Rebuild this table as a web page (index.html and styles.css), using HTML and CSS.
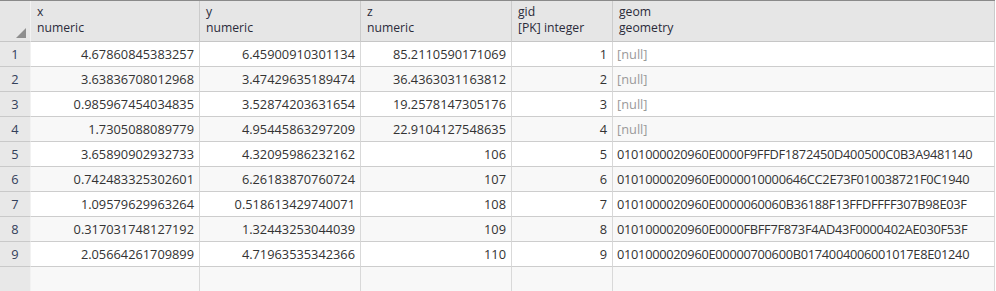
FILE: index.html
```html
<!DOCTYPE html>
<html>
<head>
<meta charset="utf-8">
<link rel="stylesheet" href="styles.css">
</head>
<body>
<div class="grid">
  <div class="hcell corner"><span class="sort"></span></div>
  <div class="hcell"><div>x</div><div>numeric</div></div>
  <div class="hcell"><div>y</div><div>numeric</div></div>
  <div class="hcell"><div>z</div><div>numeric</div></div>
  <div class="hcell"><div>gid</div><div>[PK] integer</div></div>
  <div class="hcell"><div>geom</div><div>geometry</div></div>

  <div class="rh">1</div><div class="c num">4.67860845383257</div><div class="c num">6.45900910301134</div><div class="c num">85.2110590171069</div><div class="c num">1</div><div class="c txt null">[null]</div>
  <div class="rh">2</div><div class="c num alt">3.63836708012968</div><div class="c num alt">3.47429635189474</div><div class="c num alt">36.4363031163812</div><div class="c num alt">2</div><div class="c txt null alt">[null]</div>
  <div class="rh">3</div><div class="c num">0.985967454034835</div><div class="c num">3.52874203631654</div><div class="c num">19.2578147305176</div><div class="c num">3</div><div class="c txt null">[null]</div>
  <div class="rh">4</div><div class="c num alt">1.7305088089779</div><div class="c num alt">4.95445863297209</div><div class="c num alt">22.9104127548635</div><div class="c num alt">4</div><div class="c txt null alt">[null]</div>
  <div class="rh">5</div><div class="c num">3.65890902932733</div><div class="c num">4.32095986232162</div><div class="c num">106</div><div class="c num">5</div><div class="c txt hex">0101000020960E0000F9FFDF1872450D400500C0B3A9481140</div>
  <div class="rh">6</div><div class="c num alt">0.742483325302601</div><div class="c num alt">6.26183870760724</div><div class="c num alt">107</div><div class="c num alt">6</div><div class="c txt hex alt">0101000020960E0000010000646CC2E73F010038721F0C1940</div>
  <div class="rh">7</div><div class="c num">1.09579629963264</div><div class="c num">0.518613429740071</div><div class="c num">108</div><div class="c num">7</div><div class="c txt hex">0101000020960E0000060060B36188F13FFDFFFF307B98E03F</div>
  <div class="rh">8</div><div class="c num alt">0.317031748127192</div><div class="c num alt">1.32443253044039</div><div class="c num alt">109</div><div class="c num alt">8</div><div class="c txt hex alt">0101000020960E0000FBFF7F873F4AD43F0000402AE030F53F</div>
  <div class="rh">9</div><div class="c num">2.05664261709899</div><div class="c num">4.71963535342366</div><div class="c num">110</div><div class="c num">9</div><div class="c txt hex">0101000020960E00000700600B0174004006001017E8E01240</div>
  <div class="rh"></div><div class="c alt"></div><div class="c alt"></div><div class="c alt"></div><div class="c alt"></div><div class="c alt"></div>
</div>
</body>
</html>
```
FILE: styles.css
```css
html, body {
  margin: 0;
  padding: 0;
  background: #ffffff;
}
body {
  font-family: "Open Sans", "DejaVu Sans", sans-serif;
  font-size: 12.8px;
  color: #333333;
}
.grid {
  display: grid;
  grid-template-columns: 31px 169px 161px 151px 101px 382px;
  grid-template-rows: 41px repeat(10, 25px);
  border-top: 1px solid #8a8a8a;
  width: 995px;
}
.hcell {
  box-sizing: border-box;
  background: #e6e6e6;
  border-right: 1px solid #cbcbcb;
  border-bottom: 1px solid #c6c6c6;
  padding: 3px 0 0 6px;
  font-size: 12.2px;
  line-height: 16px;
  color: #2b2b3a;
  white-space: nowrap;
  overflow: hidden;
}
.corner {
  padding: 0 4px 3px 0;
  display: flex;
  justify-content: flex-end;
  align-items: flex-end;
  border-right-color: #f2f2f2;
}
.sort {
  width: 0;
  height: 0;
  border-left: 10px solid transparent;
  border-bottom: 10px solid #8e8e8e;
}
.rh {
  box-sizing: border-box;
  background: #e8e8e8;
  border-right: 1px solid #f2f2f2;
  border-bottom: 1px solid #c9c9c9;
  text-align: center;
  line-height: 24px;
  color: #33405a;
}
.c {
  box-sizing: border-box;
  background: #ffffff;
  border-right: 1px solid #d9d9d9;
  border-bottom: 1px solid #cdcdcd;
  line-height: 24px;
  white-space: nowrap;
  overflow: hidden;
}
.c.alt {
  background: #f8f8f8;
}
.num {
  text-align: right;
  padding-right: 5px;
}
.txt {
  text-align: left;
  padding-left: 4px;
}
.hex {
  letter-spacing: -0.28px;
}
.null {
  color: #9a9a9a;
}
```
